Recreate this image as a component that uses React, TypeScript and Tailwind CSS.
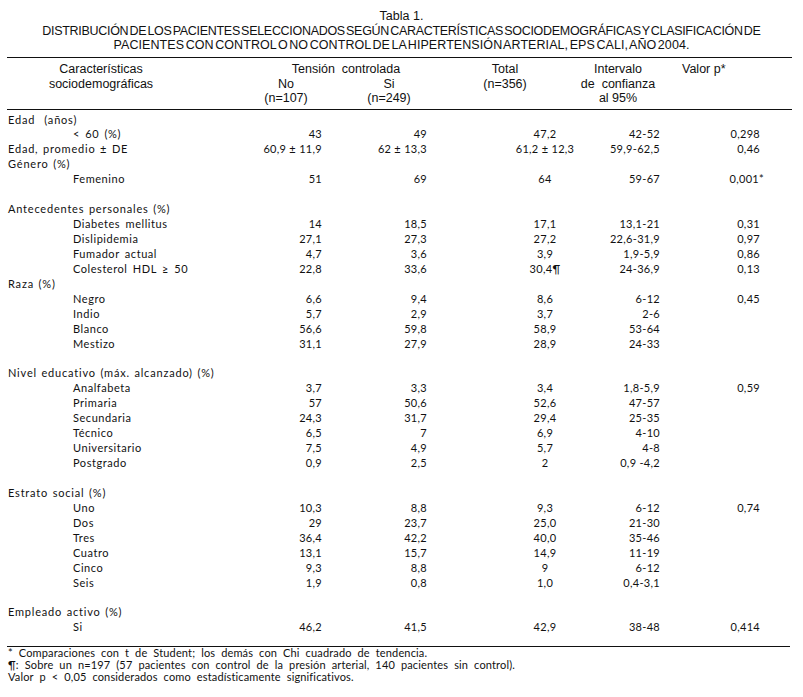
import React from "react";

type Row = {
  label?: string;
  sub?: boolean;
  no?: string;
  si?: string;
  total?: string;
  ci?: string;
  p?: string;
};

const rows: Row[] = [
  { label: "Edad\u00a0\u00a0(años)" },
  { label: "< 60 (%)", sub: true, no: "43", si: "49", total: "47,2", ci: "42-52", p: "0,298" },
  { label: "Edad, promedio ± DE", no: "60,9 ± 11,9", si: "62 ± 13,3", total: "61,2 ± 12,3", ci: "59,9-62,5", p: "0,46" },
  { label: "Género (%)" },
  { label: "Femenino", sub: true, no: "51", si: "69", total: "64", ci: "59-67", p: "0,001*" },
  {},
  { label: "Antecedentes personales (%)" },
  { label: "Diabetes mellitus", sub: true, no: "14", si: "18,5", total: "17,1", ci: "13,1-21", p: "0,31" },
  { label: "Dislipidemia", sub: true, no: "27,1", si: "27,3", total: "27,2", ci: "22,6-31,9", p: "0,97" },
  { label: "Fumador actual", sub: true, no: "4,7", si: "3,6", total: "3,9", ci: "1,9-5,9", p: "0,86" },
  { label: "Colesterol HDL ≥ 50", sub: true, no: "22,8", si: "33,6", total: "30,4¶", ci: "24-36,9", p: "0,13" },
  { label: "Raza (%)" },
  { label: "Negro", sub: true, no: "6,6", si: "9,4", total: "8,6", ci: "6-12", p: "0,45" },
  { label: "Indio", sub: true, no: "5,7", si: "2,9", total: "3,7", ci: "2-6" },
  { label: "Blanco", sub: true, no: "56,6", si: "59,8", total: "58,9", ci: "53-64" },
  { label: "Mestizo", sub: true, no: "31,1", si: "27,9", total: "28,9", ci: "24-33" },
  {},
  { label: "Nivel educativo (máx. alcanzado) (%)" },
  { label: "Analfabeta", sub: true, no: "3,7", si: "3,3", total: "3,4", ci: "1,8-5,9", p: "0,59" },
  { label: "Primaria", sub: true, no: "57", si: "50,6", total: "52,6", ci: "47-57" },
  { label: "Secundaria", sub: true, no: "24,3", si: "31,7", total: "29,4", ci: "25-35" },
  { label: "Técnico", sub: true, no: "6,5", si: "7", total: "6,9", ci: "4-10" },
  { label: "Universitario", sub: true, no: "7,5", si: "4,9", total: "5,7", ci: "4-8" },
  { label: "Postgrado", sub: true, no: "0,9", si: "2,5", total: "2", ci: "0,9 -4,2" },
  {},
  { label: "Estrato social (%)" },
  { label: "Uno", sub: true, no: "10,3", si: "8,8", total: "9,3", ci: "6-12", p: "0,74" },
  { label: "Dos", sub: true, no: "29", si: "23,7", total: "25,0", ci: "21-30" },
  { label: "Tres", sub: true, no: "36,4", si: "42,2", total: "40,0", ci: "35-46" },
  { label: "Cuatro", sub: true, no: "13,1", si: "15,7", total: "14,9", ci: "11-19" },
  { label: "Cinco", sub: true, no: "9,3", si: "8,8", total: "9", ci: "6-12" },
  { label: "Seis", sub: true, no: "1,9", si: "0,8", total: "1,0", ci: "0,4-3,1" },
  {},
  { label: "Empleado activo (%)" },
  { label: "Si", sub: true, no: "46,2", si: "41,5", total: "42,9", ci: "38-48", p: "0,414" },
];

const body = "font-['Lato','Open_Sans',sans-serif] text-[11px]";

function PValue({ p }: { p?: string }) {
  if (!p) return null;
  if (p.endsWith("*")) {
    return (
      <>
        {p.slice(0, -1)}
        <span className="-mr-[4px]">*</span>
      </>
    );
  }
  return <>{p}</>;
}

export default function App() {
  return (
    <div className="w-[803px] h-[697px] bg-white text-[#111] overflow-hidden">
      {/* Title */}
      <div className="pt-[8px] font-['Liberation_Sans',Arial,sans-serif] text-[12.5px] text-center">
        <div className="leading-[16px]">Tabla 1.</div>
        <div className="leading-[14px] tracking-[-0.024em] [word-spacing:-2px]">
          DISTRIBUCIÓN DE LOS PACIENTES SELECCIONADOS SEGÚN CARACTERÍSTICAS SOCIODEMOGRÁFICAS Y CLASIFICACIÓN DE
        </div>
        <div className="leading-[14px] tracking-[0.006em] [word-spacing:-2px]">
          PACIENTES CON CONTROL O NO CONTROL DE LA HIPERTENSIÓN ARTERIAL, EPS CALI, AÑO 2004.
        </div>
      </div>

      {/* Header */}
      <div className="mt-[5px] ml-[7px] w-[785px] border-t-[1.5px] border-b-[1.5px] border-[#111] pt-[4px] pb-[3px] font-['Liberation_Sans',Arial,sans-serif] text-[12.5px] leading-[14.5px]">
        <div className="flex">
          <div className="ml-[1px] w-[186px] text-center">
            <div>Características</div>
            <div>sociodemográficas</div>
          </div>
          <div className="ml-[42px] w-[220px]">
            <div className="text-center">Tensión&nbsp; controlada</div>
            <div className="flex">
              <div className="w-[100px] text-center">
                <div>No</div>
                <div>(n=107)</div>
              </div>
              <div className="w-[106px] text-center">
                <div>Si</div>
                <div>(n=249)</div>
              </div>
            </div>
          </div>
          <div className="ml-[9px] w-[80px] text-center">
            <div>Total</div>
            <div>(n=356)</div>
          </div>
          <div className="ml-[33px] w-[80px] text-center">
            <div>Intervalo</div>
            <div>de&nbsp; confianza</div>
            <div>al 95%</div>
          </div>
          <div className="ml-[24px]">Valor p*</div>
        </div>
      </div>

      {/* Body */}
      <div className={`ml-[7px] w-[783px] border-b-[1.5px] border-[#111] pt-[3px] pb-[11px] ${body} leading-[14.94px]`}>
        {rows.map((r, i) => (
          <div
            key={i}
            className="grid grid-cols-[215px_100px_105px_173px_60px_100px] h-[14.94px] whitespace-nowrap tracking-[0.3px]"
          >
            <div
              className={
                r.sub
                  ? "pl-[66px] tracking-[0.55px] [word-spacing:2px]"
                  : "pl-[1px] tracking-[0.8px] [word-spacing:1px]"
              }
            >
              {r.label ?? ""}
            </div>
            <div className="text-right">{r.no ?? ""}</div>
            <div className="text-right">{r.si ?? ""}</div>
            <div className="pl-[63px] text-center">{r.total ?? ""}</div>
            <div className="text-right">{r.ci ?? ""}</div>
            <div className="text-right">
              <PValue p={r.p} />
            </div>
          </div>
        ))}
      </div>

      {/* Notes */}
      <div className={`pt-[0px] pl-[8px] ${body} tracking-[0.15px] [word-spacing:3px] leading-[11.7px]`}>
        <div>* Comparaciones con t de Student; los demás con Chi cuadrado de tendencia.</div>
        <div>¶: Sobre un n=197 (57 pacientes con control de la presión arterial, 140 pacientes sin control).</div>
        <div>Valor p &lt; 0,05 considerados como estadísticamente significativos.</div>
      </div>
    </div>
  );
}
